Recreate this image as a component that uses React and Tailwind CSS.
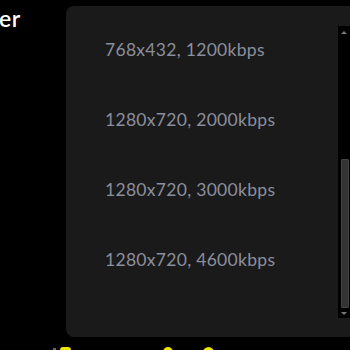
export default function App() {
  const items = [
    "768x432, 1200kbps",
    "1280x720, 2000kbps",
    "1280x720, 3000kbps",
    "1280x720, 4600kbps",
  ];
  return (
    <div className="w-[350px] h-[350px] bg-black overflow-hidden flex flex-col" style={{ fontFamily: "Lato, 'Liberation Sans', sans-serif" }}>
      <div className="flex h-[346px] shrink-0">
        <div className="w-[66px] shrink-0 overflow-hidden">
          <div className="text-white text-[23px] font-semibold leading-none mt-[7px] -ml-[1px] tracking-[0.5px]">er</div>
        </div>
        <div className="mt-[6px] h-[331px] w-[300px] shrink-0 bg-[#1a1a1a] rounded-lg flex">
          <div className="flex-1 pt-[9px] pl-[39px]">
            {items.map((t) => (
              <div key={t} className="h-[70px] flex items-center text-[#8b8e9c] text-[17.5px] tracking-[0.3px]">
                {t}
              </div>
            ))}
          </div>
          <div className="w-[12px] mt-[20px] mb-[19px] mr-[16px] bg-black flex flex-col items-center">
            <div className="h-[13px] flex items-center justify-center">
              <div className="w-0 h-0 border-l-[3px] border-r-[3px] border-b-[3px] border-l-transparent border-r-transparent border-b-[#777]" />
            </div>
            <div className="flex-1" />
            <div className="w-[8px] h-[149px] ml-[1px] bg-[#333] border border-[#444] rounded-[1px]" />
            <div className="h-[10px] flex items-center justify-center">
              <div className="w-0 h-0 border-l-[3px] border-r-[3px] border-t-[3px] border-l-transparent border-r-transparent border-t-[#777]" />
            </div>
          </div>
        </div>
      </div>
      <div className="flex items-start pt-[1px]">
        <div className="ml-[53px] mt-[1px] w-[3px] h-[3px] bg-[#666]" />
        <div className="ml-[4px] w-[11px] h-[6px] bg-[#f2e200] rounded-t-[3px]" />
        <div className="ml-[92px] w-[10px] h-[6px] bg-[#f2e200] rounded-t-full" />
        <div className="ml-[30px] w-[11px] h-[6px] bg-[#f2e200] rounded-t-full" />
      </div>
    </div>
  );
}
